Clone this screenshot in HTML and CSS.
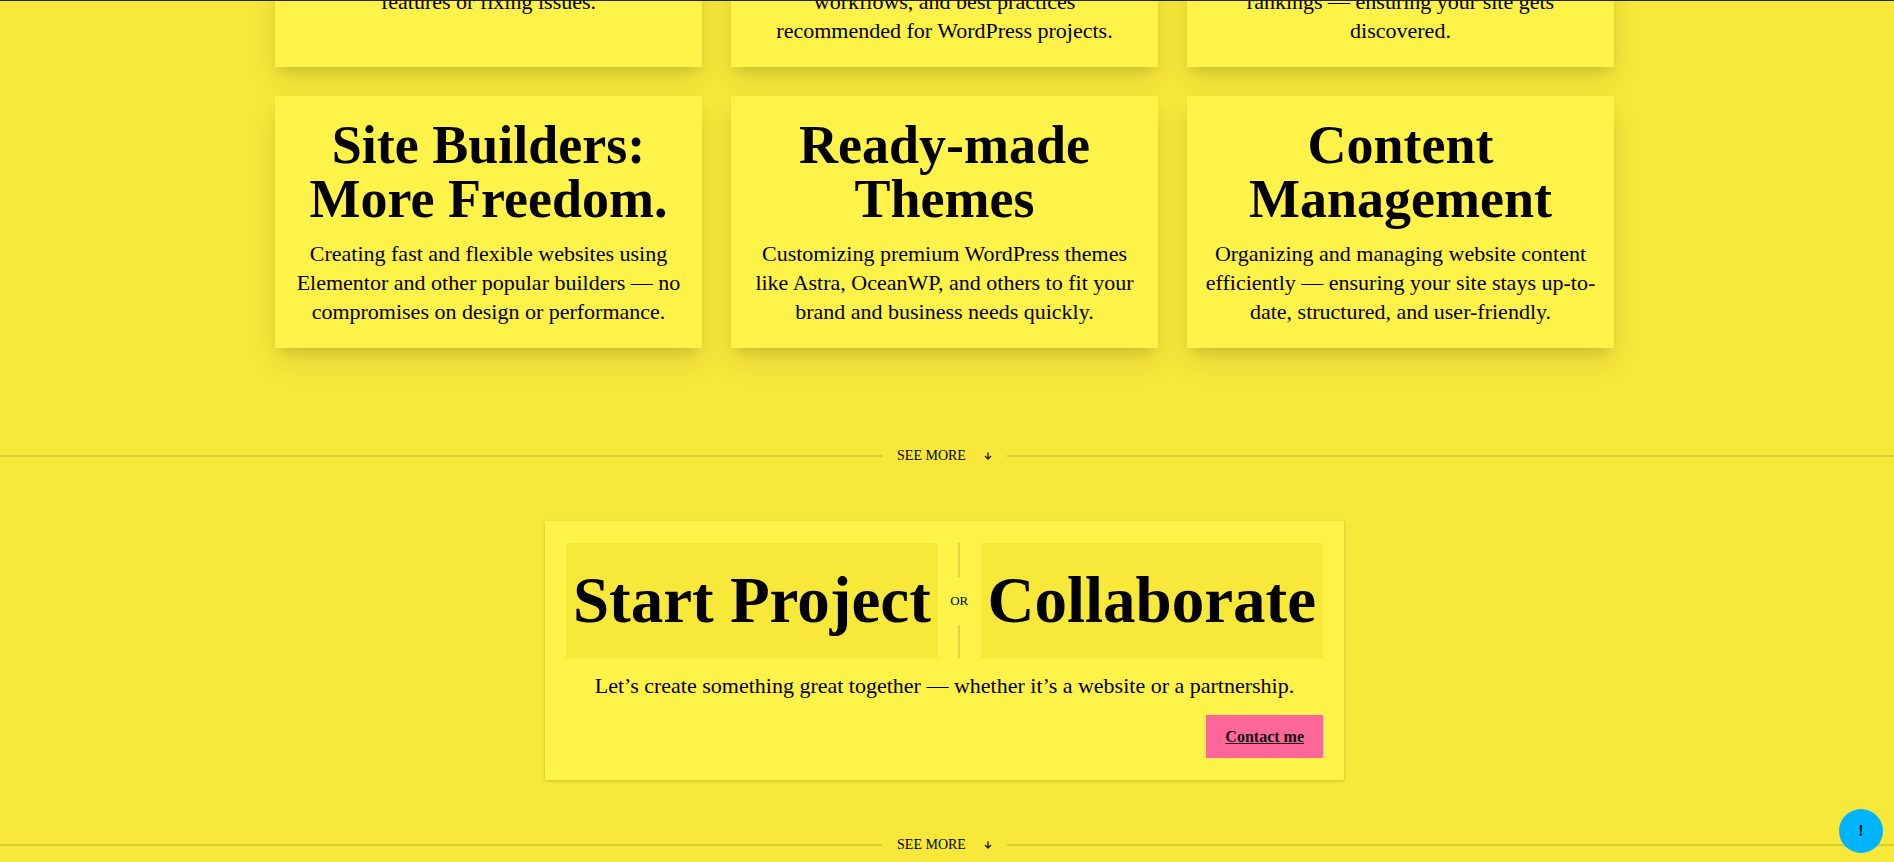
FILE: index.html
```html
<!DOCTYPE html>
<html lang="en">
<head>
    <meta charset="UTF-8">
    <meta name="viewport" content="width=device-width, initial-scale=1.0">
    <title>WordPress Services</title>
    <link rel="stylesheet" href="styles.css">
</head>
<body>
    <header class="topbar"></header>

    <main class="page">
        <!-- Services -->
        <section class="services">
            <article class="card">
                <p class="text">features or fixing issues.</p>
            </article>
            <article class="card">
                <p class="text">workflows, and best practices recommended for WordPress projects.</p>
            </article>
            <article class="card">
                <p class="text">rankings — ensuring your site gets discovered.</p>
            </article>
            <article class="card">
                <h2 class="card-title">Site Builders: More Freedom.</h2>
                <p class="text">Creating fast and flexible websites using Elementor and other popular builders — no compromises on design or performance.</p>
            </article>
            <article class="card">
                <h2 class="card-title">Ready-made Themes</h2>
                <p class="text">Customizing premium WordPress themes like Astra, OceanWP, and others to fit your brand and business needs quickly.</p>
            </article>
            <article class="card">
                <h2 class="card-title">Content Management</h2>
                <p class="text">Organizing and managing website content efficiently — ensuring your site stays up-to-date, structured, and user-friendly.</p>
            </article>
        </section>

        <div class="divider">
            <a class="divider-link" href="#contact">SEE MORE
                <svg class="arrow" viewBox="0 0 8 8"><path d="M4 0.5V7M1 4L4 7L7 4"/></svg>
            </a>
        </div>

        <!-- Contact -->
        <section class="cta" id="contact">
            <div class="choices">
                <h2 class="choice">Start Project</h2>
                <div class="or">OR</div>
                <h2 class="choice">Collaborate</h2>
            </div>
            <p class="text">Let’s create something great together — whether it’s a website or a partnership.</p>
            <a class="contact-button" href="#contact">Contact me</a>
        </section>

        <div class="divider">
            <a class="divider-link" href="#more">SEE MORE
                <svg class="arrow" viewBox="0 0 8 8"><path d="M4 0.5V7M1 4L4 7L7 4"/></svg>
            </a>
        </div>
    </main>

    <button class="notice" type="button">!</button>
</body>
</html>
```
FILE: styles.css
```css
* {
    box-sizing: border-box;
}

body {
    margin: 0;
    height: 100vh;
    overflow: hidden;
    background: #f8e83a;
    color: #000;
    font-family: "Liberation Serif", "Times New Roman", serif;
}

h2,
p {
    margin: 0;
}

.topbar {
    position: fixed;
    top: 0;
    left: 0;
    right: 0;
    height: 1px;
    background: #222;
    z-index: 2;
}

.page {
    display: flex;
    flex-direction: column;
    align-items: center;
    padding-right: 5px;
}

.text {
    font-size: 22px;
    line-height: 29px;
    text-align: center;
}

/* Services */
.services {
    display: grid;
    grid-template-columns: repeat(3, 1fr);
    gap: 29px;
    width: 100%;
    max-width: 1339px;
    margin-top: -35px; /* the first row runs under the top bar */
}

.card {
    padding: 22px 18px;
    background: #fff249;
    text-align: center;
    box-shadow: 0 14px 28px rgba(0, 0, 0, 0.09), 0 8px 12px -4px rgba(0, 0, 0, 0.11);
}

.card-title {
    margin-bottom: 13px;
    padding: 0 10px;
    font-size: 54px;
    line-height: 54px;
}

/* Divider */
.divider {
    display: flex;
    align-items: center;
    align-self: stretch;
    gap: 15px;
    margin: 98px 0 55px;
}

.divider::before,
.divider::after {
    content: "";
    flex: 1;
    height: 2px;
    background: rgba(0, 0, 0, 0.12);
}

/* the right line runs on through the page padding */
.divider::after {
    flex: 1 1 5px;
    margin-right: -5px;
}

.divider-link {
    display: flex;
    align-items: center;
    gap: 18px;
    font-size: 14px;
    line-height: 20px;
    color: inherit;
    text-decoration: none;
}

.arrow {
    width: 8px;
    height: 8px;
    fill: none;
    stroke: #222;
    stroke-width: 1.4;
}

/* Contact */
.cta {
    display: flex;
    flex-direction: column;
    width: 100%;
    max-width: 799px;
    padding: 22px 21px;
    background: #fff249;
    box-shadow: 0 1px 3px rgba(0, 0, 0, 0.2);
}

.cta + .divider {
    margin-top: 55px;
}

.choices {
    display: flex;
    margin-bottom: 13px;
}

.choice {
    flex: 1 1 auto;
    background: #f8e83a;
    font-size: 65px;
    line-height: 115px;
    text-align: center;
}

.or {
    display: flex;
    flex-direction: column;
    align-items: center;
    gap: 16px;
    width: 43px;
    font-size: 13px;
    line-height: 16px;
}

.or::before,
.or::after {
    content: "";
    flex: 1;
    width: 2px;
    background: rgba(0, 0, 0, 0.12);
}

.contact-button {
    align-self: flex-end;
    margin-top: 15px;
    padding: 0 19px;
    background: #ff6699;
    color: #111;
    font-size: 16px;
    font-weight: bold;
    line-height: 43px;
}

.notice {
    position: fixed;
    right: 11px;
    bottom: 9px;
    width: 44px;
    height: 44px;
    padding: 0;
    border: none;
    border-radius: 50%;
    background: #00b4ff;
    color: #000;
    font-family: inherit;
    font-size: 16px;
    font-weight: bold;
    cursor: pointer;
}
```
